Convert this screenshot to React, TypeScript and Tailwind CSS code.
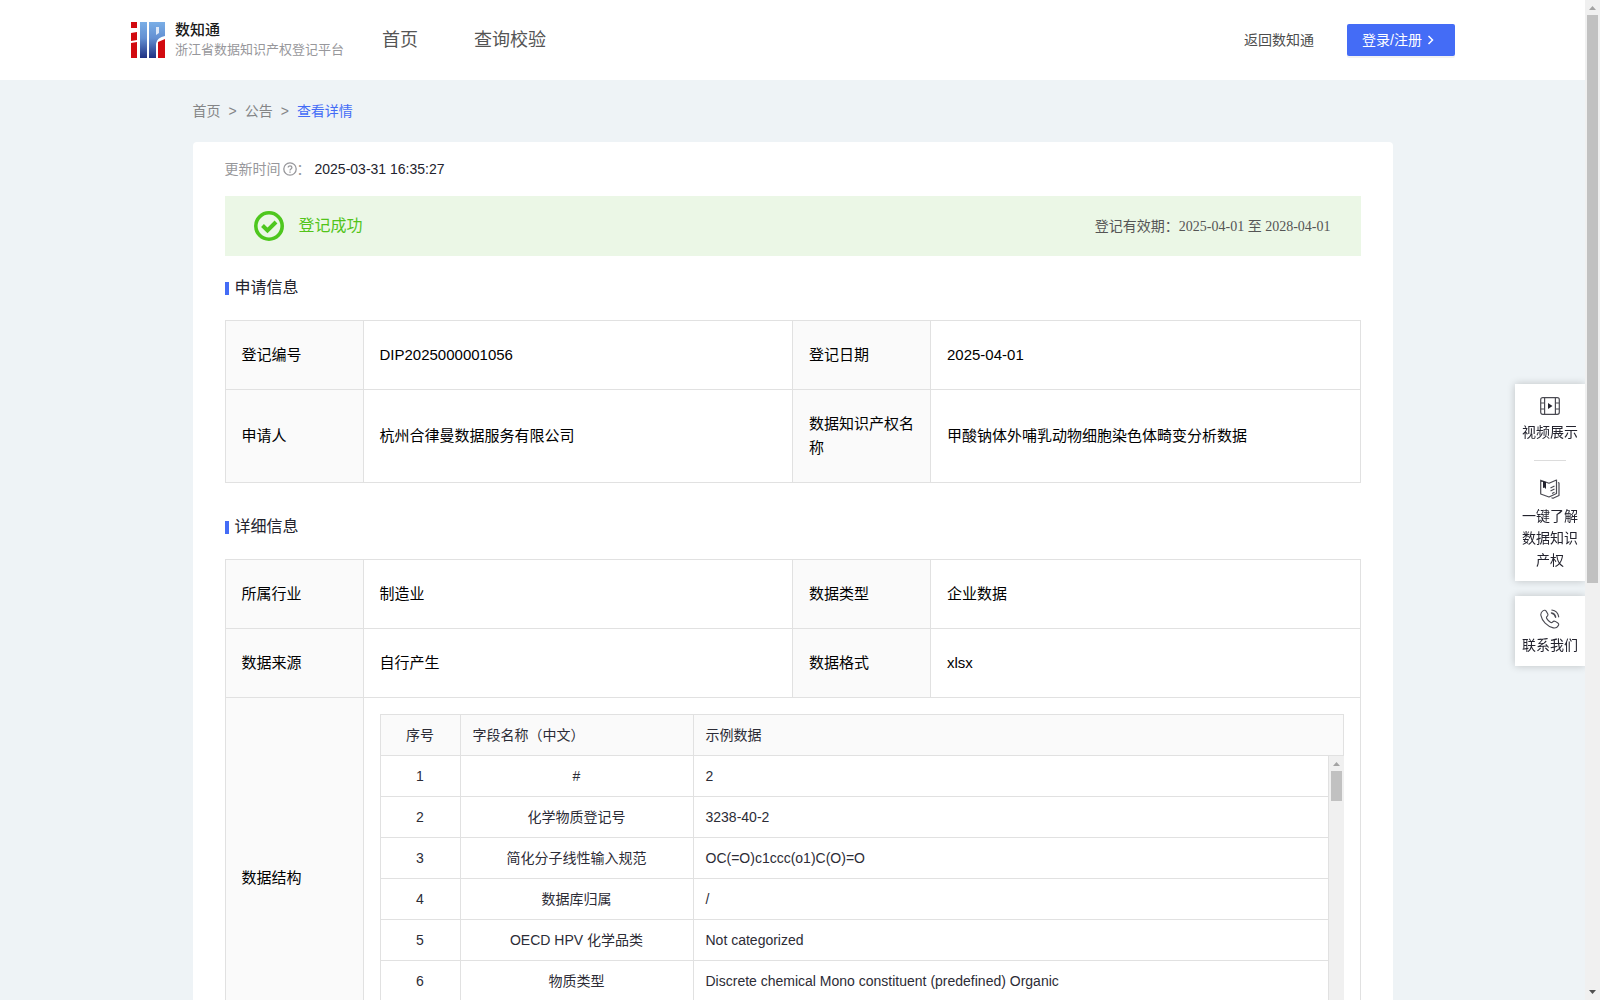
import React from "react";

const FONT = 'font-["Liberation_Sans","Noto_Sans_CJK_SC",sans-serif]';

const fields: [string, string, string][] = [
  ["1", "#", "2"],
  ["2", "化学物质登记号", "3238-40-2"],
  ["3", "简化分子线性输入规范", "OC(=O)c1ccc(o1)C(O)=O"],
  ["4", "数据库归属", "/"],
  ["5", "OECD HPV 化学品类", "Not categorized"],
  ["6", "物质类型", "Discrete chemical Mono constituent (predefined) Organic"],
];

function Logo() {
  return (
    <svg width="34" height="36" viewBox="0 0 34 36" aria-hidden="true">
      <defs>
        <linearGradient id="ip" x1="0" y1="0" x2="0" y2="36" gradientUnits="userSpaceOnUse">
          <stop offset="0" stopColor="#7aaee6" />
          <stop offset="0.45" stopColor="#6490d2" />
          <stop offset="1" stopColor="#1f3183" />
        </linearGradient>
      </defs>
      <path fill="#d20a10" d="M0 0h6v6H0zM0 11l6-1v8l-6 1zM0 21l6-1v16H0zM27 20l7-3v19h-7z" />
      <path fill="url(#ip)" d="M9 0h7v36H9zM18 0h16v14c-5 1-8 3-9 8v14h-7z" />
      <path fill="#dfe9f8" d="M25 5h3v6l-3 2z" />
    </svg>
  );
}

function Arrow({ down }: { down?: boolean }) {
  return (
    <svg width="15" height="15" viewBox="0 0 15 15" aria-hidden="true">
      {down ? (
        <path d="M4 5h7L7.5 9z" fill="#505050" />
      ) : (
        <path d="M4 10h7L7.5 6z" fill="#a3a3a3" />
      )}
    </svg>
  );
}

function Heading({ children }: { children: React.ReactNode }) {
  return (
    <h2 className="flex items-center gap-[6px] text-[16px] leading-6 text-[#23232e]">
      <span className="h-[13px] w-1 bg-[#446cf6]" />
      {children}
    </h2>
  );
}

function Columns() {
  return (
    <colgroup>
      <col className="w-[138px]" />
      <col />
      <col className="w-[138px]" />
      <col />
    </colgroup>
  );
}

function Label({ children }: { children: React.ReactNode }) {
  return (
    <th scope="row" className="border border-[#e1e1e1] bg-[#fafafa] px-4 py-[22px] text-left font-normal">
      {children}
    </th>
  );
}

function Value({ children }: { children: React.ReactNode }) {
  return <td className="border border-[#e1e1e1] px-4 py-[22px]">{children}</td>;
}

const infoTable = "w-full table-fixed border-collapse text-[15px] leading-6 text-black";

function FieldTable() {
  const cols = (
    <colgroup>
      <col className="w-20" />
      <col className="w-[233px]" />
      <col />
    </colgroup>
  );
  return (
    <div className="text-[14px] leading-5 text-[#2c2c36]">
      <table className="w-full table-fixed border-collapse">
        {cols}
        <thead>
          <tr className="bg-[#fafafa]">
            <th className="border border-[#e1e1e1] py-[10px] font-normal">序号</th>
            <th className="border border-[#e1e1e1] px-3 py-[10px] text-left font-normal">字段名称（中文）</th>
            <th className="border border-[#e1e1e1] px-3 py-[10px] text-left font-normal">示例数据</th>
          </tr>
        </thead>
      </table>
      <div className="flex h-[301px] overflow-hidden">
        <table className="min-w-0 flex-1 table-fixed border-collapse self-start">
          {cols}
          <tbody>
            {fields.map(([n, name, sample]) => (
              <tr key={n}>
                <td className="border border-t-0 border-[#e1e1e1] py-[10px] text-center">{n}</td>
                <td className="border border-t-0 border-[#e1e1e1] px-3 py-[10px] text-center">{name}</td>
                <td className="border border-t-0 border-[#e1e1e1] px-3 py-[10px]">{sample}</td>
              </tr>
            ))}
          </tbody>
        </table>
        <div className="flex w-[15px] flex-col bg-[#f0f0f0]">
          <Arrow />
          <div className="mx-[2px] h-[30px] bg-[#c1c1c1]" />
        </div>
      </div>
    </div>
  );
}

function FilmIcon() {
  return (
    <svg width="20" height="18" viewBox="0 0 20 18" fill="none" stroke="#4a4a52" strokeWidth="1.2" aria-hidden="true">
      <rect x="0.7" y="0.7" width="18.6" height="16.6" rx="2" />
      <path d="M4.6 1v16M15.4 1v16M1 6h3.6M1 12h3.6M15.4 6H19M15.4 12H19" />
      <path d="M8 6l4.5 3L8 12z" fill="#23232e" stroke="none" />
    </svg>
  );
}

function BookIcon() {
  return (
    <svg width="20" height="20" viewBox="0 0 20 20" fill="none" stroke="#4a4a52" strokeWidth="1.2" strokeLinejoin="round" aria-hidden="true">
      <path d="M0.7 1.2L9 4.2L16.5 1V14.500L9 18L0.700 15z" />
      <path d="M18 3.500l1 .5v12.500L13 19.300l-1.500-.6" />
      <path d="M10.500 9l4-2M10.500 12l4-2M12 14.500l2.500-1.200" />
      <path d="M3 2l3 1v7L4.500 8.500 3 9z" fill="#23232e" stroke="none" />
    </svg>
  );
}

function PhoneIcon() {
  return (
    <svg width="20" height="20" viewBox="0 0 20 20" fill="none" stroke="#4a4a52" strokeWidth="1.1" strokeLinecap="round" strokeLinejoin="round" aria-hidden="true">
      <path d="M3.200 1.600C4.500.8 5.600 1.200 6.300 2.400L7.700 4.800C8.300 6 8 6.700 7 7.500 6.200 8.200 6.300 8.800 6.800 9.600c1 1.600 2 2.700 3.600 3.700.8.500 1.500.6 2.100-.2.800-1 1.600-1.300 2.800-.7l2.200 1.300c1.200.7 1.500 1.700.8 2.900-1.100 1.900-2.900 2.800-5 2.300C7 17.500 2 12 .9 6.400.5 4.400 1.500 2.700 3.200 1.600z" />
      <path d="M11.500 4c2.200.4 3.700 1.900 4.100 4.200" strokeWidth="1.500" />
      <path d="M11.800 1c3.900.5 6.300 2.900 6.900 6.900" />
    </svg>
  );
}

export default function App() {
  return (
    <div className={`flex h-screen overflow-hidden bg-[#eef3f6] ${FONT}`}>
      <div className="min-w-0 flex-1 overflow-y-auto [scrollbar-width:none]">
        <header className="bg-white">
          <div className="mx-auto flex h-20 max-w-[1325px] items-center">
            <div className="flex items-center gap-[10px] pl-px">
              <Logo />
              <div>
                <div className="text-[15px] font-medium leading-5 text-[#1a1a1a]">数知通</div>
                <div className="text-[13px] leading-5 text-[#97979b]">浙江省数据知识产权登记平台</div>
              </div>
            </div>
            <nav className="ml-[38px] flex gap-14 text-[18px] text-[#555555]">
              <a href="#home">首页</a>
              <a href="#verify">查询校验</a>
            </nav>
            <div className="ml-auto flex items-center gap-[33px] text-[14px]">
              <a href="#back" className="text-[#4d4d4d]">返回数知通</a>
              <button type="button" className="flex h-8 w-[108px] items-center gap-[5px] rounded-[2px] bg-[#446cf6] pl-[15px] text-white shadow-[0_2px_0_rgba(0,0,0,0.05)]">
                登录/注册
                <svg width="7" height="10" viewBox="0 0 7 10" fill="none" stroke="currentColor" strokeWidth="1.5" aria-hidden="true">
                  <path d="M1.500 1l4 4-4 4" />
                </svg>
              </button>
            </div>
          </div>
        </header>

        <div className="mx-auto max-w-[1200px]">
          <nav aria-label="breadcrumb" className="flex h-[62px] items-center gap-2 text-[14px] text-[#848587]">
            <a href="#home">首页</a>
            <span>&gt;</span>
            <a href="#notice">公告</a>
            <span>&gt;</span>
            <a href="#detail" className="text-[#446cf6]">查看详情</a>
          </nav>

          <main className="rounded bg-white px-8 pt-4">
            <div className="flex items-center text-[14px] leading-[22px] text-[#97979b]">
              更新时间
              <svg className="ml-[2px]" width="14" height="14" viewBox="0 0 14 14" fill="none" stroke="currentColor" strokeWidth="1.3" aria-hidden="true">
                <circle cx="7" cy="7" r="6.200" />
                <path d="M5.200 5.600c0-2.400 3.700-2.300 3.700 0C8.900 7 7 7 7 8.400M7 9.500v1.200" />
              </svg>
              <span>：</span>
              <span className="ml-1 text-[#23232e]">2025-03-31 16:35:27</span>
            </div>

            <div className="mt-4 flex h-[60px] items-center bg-[#ebf7e6] pr-[30px] pl-[29px]">
              <svg width="30" height="30" viewBox="0 0 30 30" fill="none" stroke="#4ec71e" aria-hidden="true">
                <circle cx="15" cy="15" r="13.2" strokeWidth="3.6" />
                <path d="M8.500 14.500l5 5L22 11" strokeWidth="4" />
              </svg>
              <span className="ml-[15px] text-[16px] text-[#52c41a]">登记成功</span>
              <span className='ml-auto font-["Liberation_Serif","Noto_Sans_CJK_SC",serif] text-[14px] text-[#555555]'>
                登记有效期：2025-04-01 至 2028-04-01
              </span>
            </div>

            <section className="pt-5">
              <Heading>申请信息</Heading>
              <table className={`mt-5 ${infoTable}`}>
                <Columns />
                <tbody>
                  <tr>
                    <Label>登记编号</Label>
                    <Value>DIP2025000001056</Value>
                    <Label>登记日期</Label>
                    <Value>2025-04-01</Value>
                  </tr>
                  <tr>
                    <Label>申请人</Label>
                    <Value>杭州合律曼数据服务有限公司</Value>
                    <Label>数据知识产权名称</Label>
                    <Value>甲酸钠体外哺乳动物细胞染色体畸变分析数据</Value>
                  </tr>
                </tbody>
              </table>
            </section>

            <section className="pt-8">
              <Heading>详细信息</Heading>
              <table className={`mt-5 ${infoTable}`}>
                <Columns />
                <tbody>
                  <tr>
                    <Label>所属行业</Label>
                    <Value>制造业</Value>
                    <Label>数据类型</Label>
                    <Value>企业数据</Value>
                  </tr>
                  <tr>
                    <Label>数据来源</Label>
                    <Value>自行产生</Value>
                    <Label>数据格式</Label>
                    <Value>xlsx</Value>
                  </tr>
                  <tr>
                    <Label>数据结构</Label>
                    <td colSpan={3} className="border border-[#e1e1e1] px-4 pt-4">
                      <FieldTable />
                    </td>
                  </tr>
                </tbody>
              </table>
            </section>
          </main>
        </div>
      </div>

      <aside className="fixed top-[384px] right-[15px] flex w-[70px] flex-col gap-[15px] text-center text-[14px] leading-[22px] text-[#23232e]">
        <div className="flex flex-col items-center bg-white px-[7px] pt-[13px] pb-[10px] shadow-[0_0_8px_rgba(0,0,0,0.2)]">
          <a href="#video" className="flex flex-col items-center gap-[6px]">
            <FilmIcon />
            视频展示
          </a>
          <hr className="mt-[17px] mb-[18px] w-8 border-[#dcdcdc]" />
          <a href="#guide" className="flex flex-col items-center gap-[6px]">
            <BookIcon />
            一键了解数据知识产权
          </a>
        </div>
        <a href="#contact" className="flex flex-col items-center gap-[5px] bg-white pt-[13px] pb-[10px] shadow-[0_0_8px_rgba(0,0,0,0.2)]">
          <PhoneIcon />
          联系我们
        </a>
      </aside>

      <div className="relative flex w-[15px] flex-col bg-[#f0f0f0]">
        <Arrow />
        <div className="mx-[2px] h-[568px] bg-[#c1c1c1]" />
        <div className="mt-auto">
          <Arrow down />
        </div>
      </div>
    </div>
  );
}
